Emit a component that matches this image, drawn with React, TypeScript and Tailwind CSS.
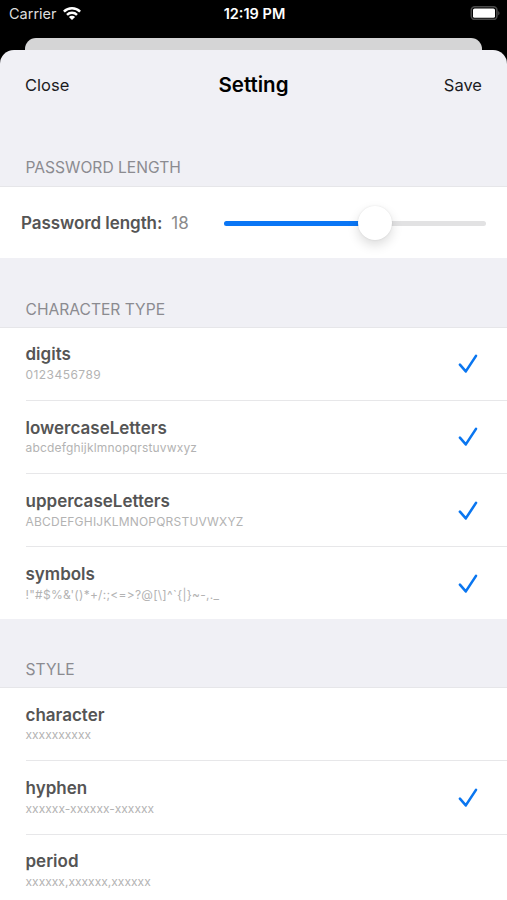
import React from "react";

interface Option {
    name: string;
    sample: string;
    sampleClass: string;
    checked?: boolean;
}

interface OptionSectionProps {
    title: string;
    titleClass: string;
    options: Option[];
}

const characterTypes: Option[] = [
    { name: "digits", sample: "0123456789", sampleClass: "tracking-[0.45px]", checked: true },
    { name: "lowercaseLetters", sample: "abcdefghijklmnopqrstuvwxyz", sampleClass: "tracking-[0.18px]", checked: true },
    { name: "uppercaseLetters", sample: "ABCDEFGHIJKLMNOPQRSTUVWXYZ", sampleClass: "tracking-[0.21px]", checked: true },
    { name: "symbols", sample: "!\"#$%&'()*+/:;<=>?@[\\]^`{|}~-,._", sampleClass: "tracking-[0.26px]", checked: true },
];

const styles: Option[] = [
    { name: "character", sample: "xxxxxxxxxx", sampleClass: "tracking-normal" },
    { name: "hyphen", sample: "xxxxxx-xxxxxx-xxxxxx", sampleClass: "tracking-[0.04px]", checked: true },
    { name: "period", sample: "xxxxxx,xxxxxx,xxxxxx", sampleClass: "tracking-[0.02px]" },
];

const WifiIcon = () => (
    <svg className="h-[14px] w-[18px]" viewBox="0 0 18 14" fill="none" stroke="white" strokeWidth="2.5">
        <path d="M0.9 4.6a11.6 11.6 0 0 1 16.2 0" />
        <path d="M4 7.8a7.2 7.2 0 0 1 10 0" />
        <path d="M9 13.1 5.9 10.1a4.4 4.4 0 0 1 6.2 0z" fill="white" stroke="none" />
    </svg>
);

const BatteryIcon = () => (
    <svg className="h-[14px] w-[30px]" viewBox="0 0 30 14" fill="none">
        <rect x="1.3" y="0.8" width="25.6" height="12.6" rx="3.4" stroke="#4a4a4a" strokeWidth="1.6" />
        <rect x="3" y="2.4" width="22" height="9.4" rx="1.6" fill="white" />
        <path d="M28.2 4.9c1.8 .9 1.8 3.5 0 4.4z" fill="#4a4a4a" />
    </svg>
);

const CheckIcon = () => (
    <svg className="h-5 w-5" viewBox="0 0 20 20" fill="none" stroke="#0a76f0" strokeWidth="2.6" strokeLinecap="round" strokeLinejoin="round">
        <path d="M1.9 10.7 7.8 17.4 18 1.9" />
    </svg>
);

const SectionHeader: React.FC<{ title: string; className: string }> = ({ title, className }) => {
    return (
        <div className={`${className} flex flex-col justify-end border-b border-[#e6e6e9] pl-[25.5px]`}>
            <h2 className="text-[15.6px] leading-[20px] text-[#8b8b90]">{title}</h2>
        </div>
    );
};

const OptionSection: React.FC<OptionSectionProps> = ({ title, titleClass, options }) => {
    return (
        <section>
            <SectionHeader title={title} className={titleClass} />
            <ul className="bg-white">
                {options.map((option, i) => (
                    <li key={option.name} className="pl-[25.5px]">
                        <div className={`${i < options.length - 1 ? "border-b border-[#e7e7e9] h-[73.3px]" : "h-[71.1px]"} flex items-start justify-between pr-[29px]`}>
                            <div className="pt-[15.8px]">
                                <p className="text-[17px] leading-[22px] font-semibold text-[#555555]">{option.name}</p>
                                <p className={`${option.sampleClass} mt-[1.6px] text-[12px] leading-[16px] text-[#b3b3b3] [font-feature-settings:'calt'_0]`}>{option.sample}</p>
                            </div>
                            {option.checked ? <div className="pt-[26.6px]"><CheckIcon /></div> : null}
                        </div>
                    </li>
                ))}
            </ul>
        </section>
    );
};

const App: React.FC = () => {
    const length = 18;
    const percent = 57.8;

    return (
        <div className="h-[900px] w-[507px] overflow-hidden bg-black font-['Inter','Liberation_Sans',sans-serif]">
            <header className="grid h-[38px] grid-cols-3 items-start pt-[4px] pl-[9px] pr-[7px] text-white">
                <div className="flex items-center gap-[6px]">
                    <span className="text-[14.5px] leading-[20px] text-[#dddddd]">Carrier</span>
                    <WifiIcon />
                </div>
                <span className="text-center text-[14.5px] leading-[20px] font-semibold">12:19 PM</span>
                <div className="flex justify-end pt-[2px]"><BatteryIcon /></div>
            </header>
            <div className="mx-[25px] h-[12px] rounded-t-[11px] bg-[#d5d5d6]" />
            <main className="h-[850px] overflow-hidden rounded-t-[14px] bg-[#f0f0f5]">
                <nav className="grid h-[70px] grid-cols-3 items-center px-[25px] text-[#1c1c1e]">
                    <button className="text-left text-[16.5px] leading-[22px]">Close</button>
                    <h1 className="text-center text-[20.5px] leading-[26px] font-semibold text-black">Setting</h1>
                    <button className="text-right text-[16.5px] leading-[22px]">Save</button>
                </nav>
                <section>
                    <SectionHeader title="PASSWORD LENGTH" className="h-[67px] pb-[8px]" />
                    <div className="flex h-[71px] items-center bg-white pl-[21px] pr-[21px]">
                        <span className="text-[17px] leading-[22px] font-semibold tracking-[-0.06px] text-[#555555]">Password length:</span>
                        <span className="ml-[9px] text-[17px] leading-[22px] text-[#8a8a8a]">{length}</span>
                        <div className="relative mt-[2px] ml-auto h-[5px] w-[262px] rounded-full bg-[#e2e2e3]">
                            <div className="h-full rounded-full bg-[#0a76f5]" style={{ width: `${percent}%` }} />
                            <div className="absolute top-[1.5px] size-[34px] -translate-x-1/2 -translate-y-1/2 rounded-full bg-white shadow-[0_5px_12px_rgba(0,0,0,0.14),0_0_2px_rgba(0,0,0,0.1)]" style={{ left: `${percent}%` }} />
                        </div>
                    </div>
                </section>
                <OptionSection title="CHARACTER TYPE" titleClass="h-[69.6px] pb-[7px]" options={characterTypes} />
                <OptionSection title="STYLE" titleClass="h-[69.4px] pb-[6.5px]" options={styles} />
            </main>
        </div>
    );
};

export default App;
